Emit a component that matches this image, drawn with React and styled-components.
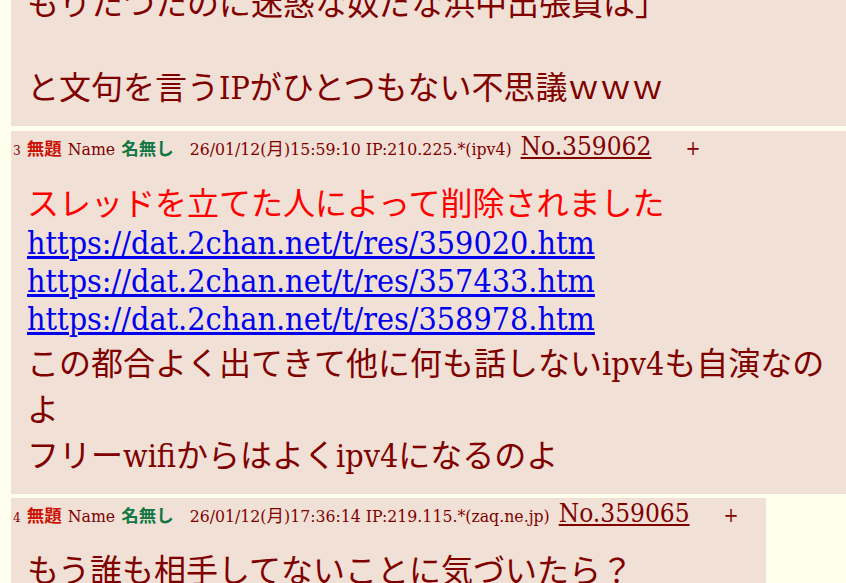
import React from 'react';
import styled, { createGlobalStyle } from 'styled-components';

const GlobalStyle = createGlobalStyle`
  html, body {
    margin: 0;
    padding: 0;
    background: #ffffee;
    overflow: hidden;
  }
  body {
    font-family: "DejaVu Serif Condensed", "DejaVu Serif", "Noto Sans CJK JP", serif;
    font-stretch: condensed;
    color: #800000;
  }
`;

const Thread = styled.div`
  display: flex;
  flex-direction: column;
  align-items: flex-start;
  gap: 4.5px;
  padding-left: 11px;
  margin-top: -22px;
`;

const Post = styled.div`
  box-sizing: border-box;
  max-width: 100%;
  align-self: ${(p) => (p.$wide ? 'stretch' : 'flex-start')};
  background: #f0e0d6;
  padding: 0 0 18px 2px;
`;

const Header = styled.div`
  font-size: 17.5px;
  white-space: nowrap;
  padding-right: 27px;
`;

const ResNum = styled.span`
  font-size: 13.5px;
`;

const Subject = styled.span`
  font-family: "Noto Sans CJK JP", sans-serif;
  font-weight: bold;
  color: #cc1105;
  margin-left: 6px;
`;

const NameLabel = styled.span`
  margin-left: 6px;
`;

const Author = styled.span`
  font-family: "Noto Sans CJK JP", sans-serif;
  font-weight: bold;
  color: #117743;
  margin-left: 6px;
`;

const Stamp = styled.span`
  margin-left: 16px;
`;

const PostNo = styled.a`
  font-size: 26px;
  color: #800000;
  text-decoration: underline;
  margin-left: 9px;
`;

const DelMark = styled.span`
  font-size: 20px;
  margin-left: 34px;
`;

const Body = styled.blockquote`
  margin: ${(p) => (p.$continued ? '0' : '17px')} 0 0 14px;
  font-size: 32px;
`;

const Removed = styled.span`
  color: #ff0000;
`;

const Link = styled.a`
  color: #0000ee;
  text-decoration: underline;
`;

function PostHeader({ n, stamp, no }) {
  return (
    <Header>
      <ResNum>{n}</ResNum>
      <Subject>無題</Subject>
      <NameLabel>Name</NameLabel>
      <Author>名無し</Author>
      <Stamp>{stamp}</Stamp>
      <PostNo href="#">{no}</PostNo>
      <DelMark>+</DelMark>
    </Header>
  );
}

export default function App() {
  return (
    <>
      <GlobalStyle />
      <Thread>
        <Post $wide>
          <Body $continued>
            もりたつたのに迷惑な奴だな浜中出張員は」
            <br />
            <br />
            と文句を言うIPがひとつもない不思議ｗｗｗ
          </Body>
        </Post>
        <Post>
          <PostHeader n="3" stamp="26/01/12(月)15:59:10 IP:210.225.*(ipv4)" no="No.359062" />
          <Body>
            <Removed>スレッドを立てた人によって削除されました</Removed>
            <br />
            <Link href="#">https://dat.2chan.net/t/res/359020.htm</Link>
            <br />
            <Link href="#">https://dat.2chan.net/t/res/357433.htm</Link>
            <br />
            <Link href="#">https://dat.2chan.net/t/res/358978.htm</Link>
            <br />
            この都合よく出てきて他に何も話しないipv4も自演なのよ
            <br />
            フリーwifiからはよくipv4になるのよ
          </Body>
        </Post>
        <Post>
          <PostHeader n="4" stamp="26/01/12(月)17:36:14 IP:219.115.*(zaq.ne.jp)" no="No.359065" />
          <Body>もう誰も相手してないことに気づいたら？</Body>
        </Post>
      </Thread>
    </>
  );
}
